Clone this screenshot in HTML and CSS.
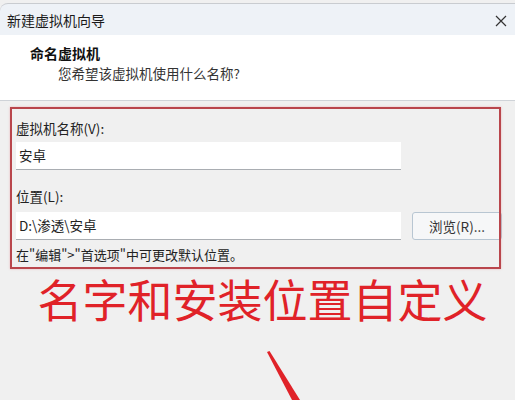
FILE: index.html
```html
<!DOCTYPE html>
<html lang="zh-CN">
<head>
	<meta charset="UTF-8">
	<title>新建虚拟机向导</title>
	<link rel="stylesheet" href="styles.css">
</head>
<body>
	<div class="window">
		<div class="titlebar">
			<span class="title">新建虚拟机向导</span>
			<svg class="close" width="12" height="12" viewBox="0 0 12 12">
				<path d="M1 1 L11 11 M11 1 L1 11" stroke="#333" stroke-width="1.2" fill="none"/>
			</svg>
		</div>
		<div class="header">
			<div class="step">命名虚拟机</div>
			<div class="question">您希望该虚拟机使用什么名称?</div>
		</div>
		<div class="content">
			<div class="label">虚拟机名称(V):</div>
			<div class="row">
				<div class="input">安卓</div>
			</div>
			<div class="label second">位置(L):</div>
			<div class="row">
				<div class="input">D:\渗透\安卓</div>
				<div class="button">浏览(R)...</div>
			</div>
			<div class="hint">在"编辑"&gt;"首选项"中可更改默认位置。</div>
			<div class="mark"></div>
		</div>
		<div class="caption">名字和安装位置自定义</div>
		<svg class="arrow" width="515" height="400" viewBox="0 0 515 400">
			<polygon points="267,352 269.5,351 300,400 292,400" fill="#e02228"/>
		</svg>
	</div>
</body>
</html>
```

FILE: styles.css
```css
body{
	margin: 0;
	background: #f0f0f0;
	font-family: "Noto Sans CJK SC", "Noto Sans", sans-serif;
	color: #222;
	overflow: hidden;
}
.window{
	width: 515px;
	height: 400px;
	position: relative;
	overflow: hidden;
}
.titlebar{
	height: 32px;
	margin-top: 3px;
	border-top: 1px solid #c9ccd0;
	border-top-left-radius: 8px;
	background: #eef2f7;
	display: flex;
	align-items: center;
	justify-content: space-between;
	padding: 0 7px;
	box-sizing: border-box;
}
.title{
	font-size: 14px;
	color: #1a1a1a;
}
.close{
	margin-right: 1px;
	margin-top: 2px;
}
.header{
	height: 66px;
	background: #fff;
	border-bottom: 1px solid #cfd3d8;
	box-sizing: border-box;
	padding-top: 8px;
}
.step{
	font-size: 14px;
	font-weight: bold;
	padding-left: 30px;
	line-height: 20px;
	color: #111;
}
.question{
	font-size: 13.5px;
	padding-left: 58px;
	line-height: 20px;
	color: #333;
}
.content{
	position: relative;
	padding: 18px 0 0 16px;
}
.label{
	font-size: 13.5px;
	line-height: 18px;
	color: #222;
}
.label.second{
	margin-top: 17px;
}
.row{
	display: flex;
	gap: 11px;
	margin-top: 5px;
}
.label.second + .row{
	margin-top: 7px;
}
.input{
	width: 385px;
	height: 28px;
	background: #fff;
	border-bottom: 1px solid #a9adb2;
	box-sizing: border-box;
	font-size: 13.5px;
	line-height: 26px;
	padding-left: 3px;
	color: #222;
}
.button{
	width: 90px;
	height: 28px;
	box-sizing: border-box;
	border: 1px solid #b8c6d2;
	border-radius: 3px;
	background: #f6f7f8;
	font-size: 13.5px;
	line-height: 26px;
	text-align: center;
	color: #333;
}
.hint{
	margin-top: 6px;
	font-size: 13px;
	line-height: 18px;
	color: #222;
}
.mark{
	position: absolute;
	left: 10px;
	top: 6px;
	width: 487px;
	height: 158px;
	border: 2px solid #b9464c;
	box-shadow: 0 0 2px rgba(230, 120, 130, 0.5);
}
.caption{
	margin-top: 7px;
	text-align: center;
	font-size: 45px;
	line-height: 56px;
	color: #e02228;
	padding-left: 10px;
}
.arrow{
	position: absolute;
	left: 0;
	top: 0;
}
```
